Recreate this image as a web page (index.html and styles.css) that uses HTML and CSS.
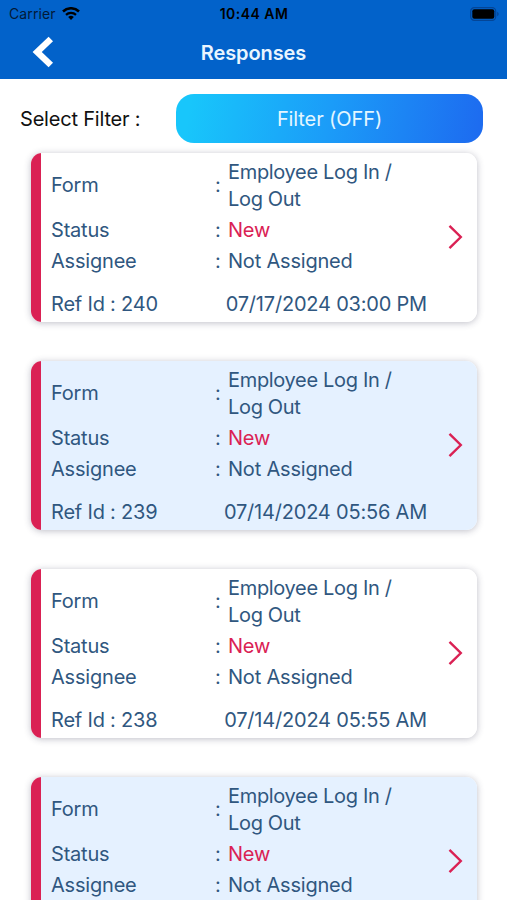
FILE: index.html
```html
<!DOCTYPE html>
<html lang="en">
<head>
    <meta charset="UTF-8">
    <meta name="viewport" content="width=device-width, initial-scale=1.0">
    <title>Responses</title>
    <link rel="stylesheet" href="styles.css">
</head>
<body>
    <header class="header">
        <div class="status-bar">
            <div class="carrier">
                <span>Carrier</span>
                <svg class="wifi" viewBox="0 0 18 13">
                    <path d="M1 4.5a11.4 11.4 0 0 1 16 0" fill="none" stroke="#000" stroke-width="2.5"/>
                    <path d="M4 7.9a7.2 7.2 0 0 1 10 0" fill="none" stroke="#000" stroke-width="2.2"/>
                    <path d="M9 13L6.2 10.1a4 4 0 0 1 5.6 0z"/>
                </svg>
            </div>
            <span class="time">10:44 AM</span>
            <svg class="battery" viewBox="0 0 29 14">
                <rect x="0.7" y="0.7" width="25" height="12.6" rx="3.6" fill="none" stroke="#044596" stroke-width="1.2"/>
                <rect x="2.3" y="2.3" width="22" height="9.4" rx="2"/>
                <path d="M27.2 4.8q1.5 .8 1.5 2.2t-1.5 2.2z" fill="#044596"/>
            </svg>
        </div>
        <div class="nav-bar">
            <svg class="back" viewBox="0 0 22 32">
                <path d="M18.8 3L5.2 16L18.8 29" fill="none" stroke="#fff" stroke-width="6.4"/>
            </svg>
            <h1 class="title">Responses</h1>
        </div>
    </header>

    <div class="filter">
        <span class="filter-label">Select Filter :</span>
        <button class="filter-button">Filter (OFF)</button>
    </div>

    <main class="list">
        <div class="card">
            <div class="details">
                <div class="row"><span class="label">Form</span><span class="colon">:</span><span class="value form">Employee Log In /<br>Log Out</span></div>
                <div class="row"><span class="label">Status</span><span class="colon">:</span><span class="value new">New</span></div>
                <div class="row"><span class="label">Assignee</span><span class="colon">:</span><span class="value">Not Assigned</span></div>
                <div class="footer"><span class="ref">Ref Id : 240</span><span class="date">07/17/2024 03:00 PM</span></div>
            </div>
            <svg class="arrow" viewBox="0 0 16 26"><path d="M1.5 1.8L12.8 13L1.5 24.2"/></svg>
        </div>

        <div class="card alt">
            <div class="details">
                <div class="row"><span class="label">Form</span><span class="colon">:</span><span class="value form">Employee Log In /<br>Log Out</span></div>
                <div class="row"><span class="label">Status</span><span class="colon">:</span><span class="value new">New</span></div>
                <div class="row"><span class="label">Assignee</span><span class="colon">:</span><span class="value">Not Assigned</span></div>
                <div class="footer"><span class="ref">Ref Id : 239</span><span class="date">07/14/2024 05:56 AM</span></div>
            </div>
            <svg class="arrow" viewBox="0 0 16 26"><path d="M1.5 1.8L12.8 13L1.5 24.2"/></svg>
        </div>

        <div class="card">
            <div class="details">
                <div class="row"><span class="label">Form</span><span class="colon">:</span><span class="value form">Employee Log In /<br>Log Out</span></div>
                <div class="row"><span class="label">Status</span><span class="colon">:</span><span class="value new">New</span></div>
                <div class="row"><span class="label">Assignee</span><span class="colon">:</span><span class="value">Not Assigned</span></div>
                <div class="footer"><span class="ref">Ref Id : 238</span><span class="date">07/14/2024 05:55 AM</span></div>
            </div>
            <svg class="arrow" viewBox="0 0 16 26"><path d="M1.5 1.8L12.8 13L1.5 24.2"/></svg>
        </div>

        <div class="card alt">
            <div class="details">
                <div class="row"><span class="label">Form</span><span class="colon">:</span><span class="value form">Employee Log In /<br>Log Out</span></div>
                <div class="row"><span class="label">Status</span><span class="colon">:</span><span class="value new">New</span></div>
                <div class="row"><span class="label">Assignee</span><span class="colon">:</span><span class="value">Not Assigned</span></div>
            </div>
            <svg class="arrow" viewBox="0 0 16 26"><path d="M1.5 1.8L12.8 13L1.5 24.2"/></svg>
        </div>
    </main>
</body>
</html>
```

FILE: styles.css
```css
* {
    box-sizing: border-box;
}

body {
    margin: 0;
    height: 100vh;
    overflow: hidden;
    background-color: #fff;
    font-family: Inter, sans-serif;
    font-size: 20px;
    letter-spacing: -0.2px;
    color: #305780;
}

.header {
    height: 79px;
    background-color: #0262ca;
}

.status-bar {
    display: grid;
    grid-template-columns: 1fr auto 1fr;
    align-items: center;
    height: 27px;
    padding: 0 8px 0 9px;
    font-size: 14px;
    letter-spacing: 0.1px;
    color: #000;
}

.carrier {
    display: flex;
    align-items: center;
    gap: 6px;
    color: #021a38;
}

.wifi {
    width: 18px;
    height: 13px;
}

.time {
    font-weight: 600;
    letter-spacing: 0.45px;
}

.battery {
    justify-self: end;
    width: 29px;
    height: 14px;
}

.nav-bar {
    display: grid;
    grid-template-columns: 54px 1fr 54px;
    align-items: center;
    height: 50px;
}

.back {
    justify-self: end;
    width: 22px;
    height: 32px;
}

.title {
    margin: 1px 0 0;
    text-align: center;
    font-size: 20px;
    font-weight: 600;
    letter-spacing: -0.1px;
    color: #e9f5ff;
}

.filter {
    display: flex;
    justify-content: space-between;
    align-items: center;
    padding: 15px 24px 0 20px;
}

.filter-label {
    color: #111;
}

.filter-button {
    width: 307px;
    height: 49px;
    border: none;
    border-radius: 18px;
    background: linear-gradient(100deg, #18c6fb 5%, #1b9cf8 50%, #1d6cf0 98%);
    font-family: inherit;
    font-size: 20px;
    letter-spacing: -0.1px;
    color: #e3f6ff;
}

.list {
    display: flex;
    flex-direction: column;
    gap: 39px;
    padding: 9.5px 30px 0 31px;
}

.card {
    display: flex;
    align-items: center;
    justify-content: space-between;
    flex-shrink: 0;
    height: 169px;
    padding-right: 13px;
    border-radius: 11px;
    background: linear-gradient(to right, #da2154 10.5px, #fff 10.5px);
    box-shadow: 0 1px 7px rgba(40, 40, 70, 0.3);
}

.card.alt {
    background: linear-gradient(to right, #da2154 10.5px, #e5f1ff 10.5px);
}

.details {
    display: flex;
    flex-direction: column;
    width: 396px;
    height: 100%;
    padding: 6px 0 0 20px;
}

.row {
    display: grid;
    grid-template-columns: 164px 13px 1fr;
    align-items: center;
    height: 31px;
    line-height: 27px;
}

.row:first-child {
    height: 54px;
    margin-bottom: 2px;
}

.form {
    letter-spacing: -0.33px;
}

.new {
    color: #da2154;
}

.footer {
    display: flex;
    justify-content: space-between;
    margin-top: 14px;
    line-height: 27px;
}

.arrow {
    width: 16px;
    height: 26px;
    fill: none;
    stroke: #da2154;
    stroke-width: 2.4;
}
```
